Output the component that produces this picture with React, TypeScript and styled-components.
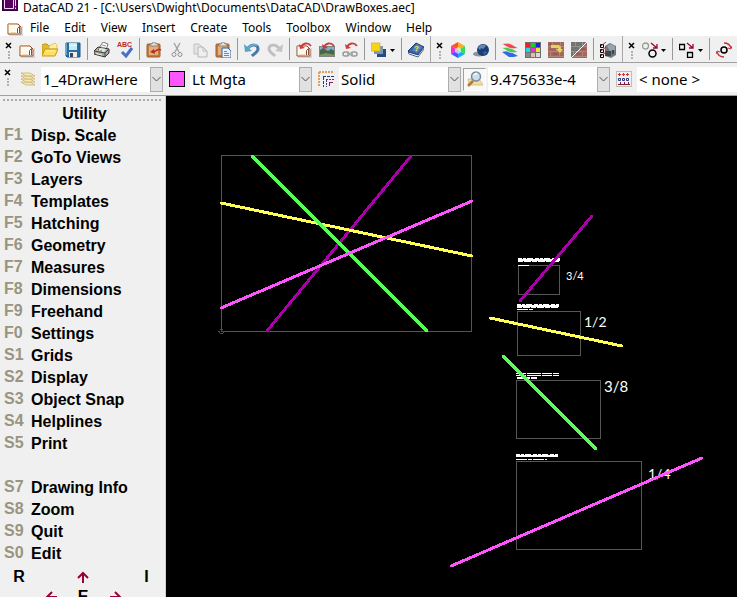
import React from "react";
import styled, { createGlobalStyle } from "styled-components";

const GlobalStyle = createGlobalStyle`
  * { box-sizing: border-box; }
  html, body, #root { height: 100%; }
  body { margin: 0; overflow: hidden; background: #f0f0f0; }
  button, select { font: inherit; color: inherit; margin: 0; padding: 0; border: 0; background: none; }
`;

const Window = styled.div`
  display: flex;
  flex-direction: column;
  height: 100vh;
  overflow: hidden;
  color: #000;
  font-family: "Noto Sans", "Open Sans", sans-serif;
`;

const TitleBar = styled.header`
  display: flex;
  flex: none;
  align-items: flex-start;
  gap: 5px;
  height: 15px;
  padding-left: 2px;
  background: #fff;
  white-space: nowrap;
`;

const Title = styled.h1`
  margin: 0;
  font-size: 12px;
  font-weight: 400;
  line-height: 15px;
`;

const MenuBar = styled.nav`
  display: flex;
  flex: none;
  align-items: center;
  gap: 15px;
  height: 21px;
  padding: 4px 0 0 7px;
  background: #fff;
  font-size: 12px;
  line-height: 17px;
`;

const MenuButton = styled.button`
  white-space: nowrap;
`;

const MenuIcon = styled.svg`
  flex: none;
  margin-right: -8px;
`;

const ToolBar = styled.div<{ $tall?: boolean }>`
  display: flex;
  flex: none;
  align-items: stretch;
  height: ${(p) => (p.$tall ? 33 : 27)}px;
  border-bottom: 1px solid #a0a0a0;
  background: #f0f0f0;
  overflow: hidden;
`;

const ToolGroup = styled.div`
  display: flex;
  flex: none;
  align-items: center;
  padding-right: 2px;
  border-right: 1px solid #a8a8a8;
`;

const GripButton = styled.button<{ $narrow?: boolean }>`
  display: flex;
  flex: none;
  width: ${(p) => (p.$narrow ? 14 : 16)}px;
  align-self: flex-start;
  justify-content: center;
  padding-top: 5px;
`;

const ToolButton = styled.button<{ $menu?: boolean }>`
  display: flex;
  flex: none;
  align-items: center;
  gap: 3px;
  width: ${(p) => (p.$menu ? 31 : 23)}px;
  height: 23px;
  padding: 2px 0 0 3px;
`;

const FieldButton = styled.button<{ $pressed?: boolean }>`
  display: grid;
  flex: none;
  place-items: center;
  width: 23px;
  height: 23px;
  margin: 0 2px;
  border: 1px solid transparent;
  ${(p) =>
    p.$pressed && `background: #f8f8f8; border-color: #a0a0a0 #fff #fff #a0a0a0;`}
`;

const Separator = styled.span`
  flex: none;
  width: 1px;
  height: 22px;
  margin: 0 3px 0 2px;
  background: #989898;
`;

const Fields = styled.div`
  display: flex;
  flex: 1;
  align-items: center;
`;

const ComboBox = styled.label<{ $fill?: boolean }>`
  display: grid;
  grid-template-columns: 1fr 13px;
  flex: ${(p) => (p.$fill ? "1 0 122px" : "0 0 122px")};
  height: 25px;
  background: #fff;
  font-size: 15px;
`;

const Select = styled.select`
  grid-area: 1 / 1 / 2 / 3;
  min-width: 0;
  padding-left: 2px;
  appearance: none;
  outline: none;
`;

const DropArrow = styled.span`
  display: grid;
  grid-area: 1 / 2 / 2 / 3;
  place-items: center;
  border: 1px solid #adadad;
  background: #e1e1e1;
  pointer-events: none;
`;

const Main = styled.main`
  display: flex;
  flex: 1;
  min-height: 0;
`;

const SideMenu = styled.aside`
  flex: 0 0 166px;
  overflow: hidden;
  border-right: 1px solid #d0d0d0;
  background: #f0f0f0;
  font: bold 16px/22px "Liberation Sans", Arial, sans-serif;
`;

const SideGrip = styled.div`
  height: 7px;
  margin: 0 2px;
  background: radial-gradient(circle at 2px 4px, #aaa 1px, transparent 1px) 0 0 / 4px 7px;
`;

const SideTitle = styled.h2`
  margin: 0;
  padding-left: 4px;
  font: inherit;
  text-align: center;
`;

const SideItem = styled.button`
  display: grid;
  grid-template-columns: 27px 1fr;
  width: 100%;
  height: 22px;
  padding-left: 4px;
  text-align: left;
  white-space: nowrap;
`;

const Key = styled.span`
  color: #989580;
  line-height: 20px;
`;

const SideGap = styled.div`
  height: 22px;
`;

const Pad = styled.div`
  display: grid;
  grid-template-columns: 38px 25px 40px 25px 1fr;
  grid-auto-rows: 20px;
  align-items: center;
  justify-items: center;
  padding-top: 2px;
`;

const PadButton = styled.button<{ $col: number; $row: number }>`
  display: grid;
  grid-column: ${(p) => p.$col};
  grid-row: ${(p) => p.$row};
  place-items: center;
  line-height: 20px;
`;

const Drawing = styled.svg`
  flex: 1;
  min-width: 0;
  background: #000;
`;

const DimText = styled.text`
  fill: #fff;
  font-family: Lato, "Open Sans", sans-serif;
  font-weight: 400;
`;

const paperShape = (
  <>
    <path d="M2 15h14V6" fill="none" stroke="#c4b8b0" />
    <path d="M1 4h10l3 3v7H1z" fill="#fffaf0" stroke="#8c4a30" />
    <path d="M1.500 13V4.500H10" fill="none" stroke="#d8b08c" />
    <path d="M10.500 13V8.500l2-2v6.500" fill="#fff" stroke="#8c4a30" />
    <path d="M3 12.500h6" stroke="#f0d8b0" />
  </>
);

const redArrow = (
  <>
    <path d="M5 5C7 1 12 0 15 4" fill="none" stroke="#cc3c3c" strokeWidth="1.800" />
    <path d="M3 2l1 5 5-1z" fill="#cc3c3c" />
  </>
);

const clipShape = (
  <>
    <rect x="1" y="2" width="13" height="13" rx="1" fill="#c67a3a" stroke="#9c5c2c" />
    <rect x="3" y="4" width="9" height="9" fill="#e0b080" />
    <path d="M4 4V2h2l1-2h2l1 2h2v2z" fill="#dedede" stroke="#77706a" strokeWidth=".7" />
  </>
);

const bricks = (
  <>
    <rect width="16" height="16" fill="#a4675c" />
    <path d="M0 4.500h16M0 9.500h16M0 14.500h16M4.500 0v4M12.500 0v4M8.500 5v4M2.500 10v4M11.500 10v4" stroke="#b08478" />
    <path d="M1 2h2M10 7h4M5 12h4" stroke="#8c5048" />
  </>
);

const icons: Record<string, React.ReactNode> = {
  new: paperShape,
  open: (
    <>
      <path d="M0 13V3l2-1h3l2 2h5v9z" fill="#e4b828" stroke="#c09820" />
      <path d="M7 4l6-3 2 2v4H7z" fill="#fff0a0" stroke="#d8b040" strokeWidth=".7" />
      <path d="M0 14l3-7h13l-3 7z" fill="#ffe058" stroke="#c79a1c" />
      <path d="M4 9h9" stroke="#fff6b8" />
    </>
  ),
  save: (
    <>
      <path d="M1 1h14v14H2l-1-1z" fill="#2c6ca4" stroke="#1c5488" />
      <rect x="4" y="1" width="8" height="7" fill="#c4ecf0" />
      <path d="M4 3.500h8" stroke="#e8fcfc" />
      <path d="M1.500 1v12" stroke="#60a8cc" />
      <rect x="4" y="10" width="8" height="5" fill="#eee" />
      <rect x="5" y="11" width="3" height="4" fill="#384858" />
    </>
  ),
  print: (
    <>
      <path d="M5 6l4-6 5 2-2 6z" fill="#fff" stroke="#777" />
      <path d="M0 9l4-4 11 2v4l-4 4-11-3z" fill="#a8a8a8" stroke="#333" />
      <path d="M0 9l11 2 4-4M11 11v4" stroke="#444" fill="none" />
      <path d="M3 8l3-2 6 1-2 3z" fill="#e8e8e8" />
      <path d="M8 3l4 1M7 5l4 1" stroke="#999" />
      <path d="M2 11.500l6 1.500" stroke="#eee" />
      <path d="M6 9h2" stroke="#10d830" strokeWidth="1.500" />
      <path d="M4 7.500h1" stroke="#d02020" strokeWidth="1.500" />
    </>
  ),
  spell: (
    <>
      <text x="0" y="5" fontSize="7" fontWeight="bold" fontFamily="Liberation Sans" fill="#bf2828">ABC</text>
      <path d="M5 10l4 4 6-8" fill="none" stroke="#4870c4" strokeWidth="3" />
    </>
  ),
  clipUndo: (
    <>
      {clipShape}
      <path d="M15 8C11 6 9 11 6 10" fill="none" stroke="#c02828" strokeWidth="1.500" />
      <path d="M4 10l4-3 1 5z" fill="#c02828" />
    </>
  ),
  cut: (
    <>
      <path d="M5 1l5 9M11 1L6 10" stroke="#a4a4a4" strokeWidth="1.500" />
      <circle cx="5" cy="12.500" r="2" fill="none" stroke="#909090" />
      <circle cx="11" cy="12.500" r="2" fill="none" stroke="#909090" />
    </>
  ),
  copy: (
    <>
      <path d="M2 2h5l3 3v7H2z" fill="#e4e4e4" stroke="#c0c0c0" />
      <path d="M6 5h5l4 4v6H6z" fill="#eee" stroke="#b8b8b8" />
      <path d="M11 5v4h4" fill="none" stroke="#bbb" />
    </>
  ),
  paste: (
    <>
      {clipShape}
      <path d="M7 6h6l3 3v7H7z" fill="#eaf4ff" stroke="#3a6094" />
      <path d="M9 9.500h3M9 11.500h5M9 13.500h5" stroke="#558dbb" />
    </>
  ),
  undo: (
    <>
      <path d="M4 6c4-4 10-4 10 1 0 3-3 4-6 7" fill="none" stroke="#4878ac" strokeWidth="3" />
      <path d="M4 6c4-4 8-4 9-2" fill="none" stroke="#70b4d0" strokeWidth="1.500" />
      <path d="M0 2l1 8 7-1z" fill="#58a4c4" />
    </>
  ),
  redo: (
    <>
      <path d="M12 6C8 2 2 2 2 7c0 3 3 4 6 7" fill="none" stroke="#c0c0c0" strokeWidth="3" />
      <path d="M16 2l-1 8-7-1z" fill="#c4c4c4" />
    </>
  ),
  docReload: (<>{paperShape}{redArrow}</>),
  picture: (
    <>
      <rect x="0" y="4" width="16" height="11" fill="#7faed6" />
      <path d="M0 9l4-3 5 3 3-2 4 2v6H0z" fill="#466848" />
      <path d="M0 13l7-2 9 2v2H0z" fill="#7c9858" />
      <rect x=".5" y="4.500" width="15" height="10" fill="none" stroke="#7a8480" />
      {redArrow}
    </>
  ),
  link: (
    <>
      <rect x="1" y="10" width="6" height="4" rx="2" fill="none" stroke="#999" strokeWidth="1.500" />
      <rect x="9" y="10" width="6" height="4" rx="2" fill="none" stroke="#999" strokeWidth="1.500" />
      <path d="M5 12h6" stroke="#aaa" strokeWidth="2" />
      {redArrow}
    </>
  ),
  stack: (
    <>
      <rect x="6" y="7" width="9" height="8" fill="#284a80" />
      <rect x="3" y="4" width="9" height="8" fill="#7898b8" />
      <rect x="0" y="1" width="9" height="8" fill="#f8d418" stroke="#dcb010" strokeWidth=".7" />
    </>
  ),
  help: (
    <>
      <path d="M0 9l8-8 8 4-6 8-9-3z" fill="#3a64a8" stroke="#203c6c" />
      <path d="M0 10l10 3 6-8v2l-6 8-9-3z" fill="#fff" stroke="#203c6c" strokeWidth=".8" />
      <path d="M4 8l5-6 5 3-5 6z" fill="#5484bc" />
      <text x="6" y="9" fontSize="8" fontWeight="bold" fontFamily="Liberation Sans" fill="#f4ec50">?</text>
    </>
  ),
  cube: (
    <>
      <path d="M8 0l7 4-7 4z" fill="#f8b020" />
      <path d="M8 0L1 4l7 4z" fill="#ff5030" />
      <path d="M1 4v8l7-4z" fill="#f030d0" />
      <path d="M1 12l7 4V8z" fill="#5050ff" />
      <path d="M8 16l7-4-7-4z" fill="#18a8ff" />
      <path d="M15 12V4L8 8z" fill="#30e050" />
      <path d="M8 5l3 2v3l-3 2-3-2V7z" fill="#fff" opacity=".6" />
    </>
  ),
  globe: (
    <>
      <ellipse cx="6" cy="12" rx="6" ry="2.500" fill="#8894a0" />
      <circle cx="10" cy="8" r="6" fill="#1c3c78" />
      <path d="M5 6c2-4 6-4 8-2l-3 3-2-1-1 2z" fill="#6488b8" />
      <path d="M10 10l3-1 1 2-3 2z" fill="#3c6088" />
    </>
  ),
  sheets: (
    <>
      <path d="M0 10c3-1 6-1 9 0l7 4c-3 1-6 1-9 1z" fill="#3468e0" />
      <path d="M0 6c3-1 6-1 9 0l7 4c-3 1-6 1-9 0z" fill="#40cc50" stroke="#f0f0f0" strokeWidth=".7" />
      <path d="M0 2c3-1 6-1 9 0l7 4c-3 1-6 1-9 0z" fill="#ec4850" stroke="#f0f0f0" strokeWidth=".7" />
    </>
  ),
  palette: (
    <>
      <rect width="16" height="16" fill="#707070" />
      {["#f02020", "#20d020", "#2020e8", "#20d8e8", "#e830d8", "#f0e820", "#888", "#e8b8b0", "#d8d8d8"].map((c, i) => (
        <rect key={c} x={1 + (i % 3) * 5} y={1 + Math.floor(i / 3) * 5} width="4" height="4" fill={c} />
      ))}
    </>
  ),
  brickArrow: (
    <>
      {bricks}
      <path d="M3 3h8l2 2v2h2l-3 4-4-4h2V6H3z" fill="#e0d850" />
    </>
  ),
  brickSplit: (
    <>
      {bricks}
      <path d="M0 0h16L0 16z" fill="#747470" />
      <path d="M0 4.500h10M0 9.500h6M4.500 0v4M11.500 0v4M8.500 5v2M2.500 10v2" stroke="#929290" />
      <path d="M0 16L16 0" stroke="#fff" />
    </>
  ),
  machine: (
    <>
      <path d="M5 4l5-3 6 3v9l-5 3-6-2z" fill="#6c7880" />
      <path d="M7 4l4-2 4 2v4l-5 1z" fill="#98a4aa" />
      <path d="M5 9h6v5H5zM12 8h2v4h-2z" fill="#40484e" />
      <path d="M.500 2.500h3v3h-3zM.500 7.500h3v3h-3zM.500 12.500h3v3h-3z" fill="#fff" stroke="#000" />
      <path d="M1 4l5-4M1 9l5-4M1 14l5-4" stroke="#c02828" />
    </>
  ),
  circles: (
    <>
      <circle cx="3.500" cy="4" r="3" fill="none" stroke="#9a9a88" strokeWidth="1.300" />
      <circle cx="10.500" cy="11.500" r="3.500" fill="none" stroke="#000" strokeWidth="1.500" />
      <path d="M9 1l6 5M15 2v4h-4" fill="none" stroke="#a00038" strokeWidth="1.300" />
    </>
  ),
  squares: (
    <>
      <path d="M.500 2.500h5v5h-5zM8.500 10.500h5v5h-5z" fill="none" stroke="#000" strokeWidth="1.300" />
      <path d="M8 1l6 5M14 2v4h-4" fill="none" stroke="#a00038" strokeWidth="1.300" />
    </>
  ),
  rotate: (
    <>
      <circle cx="8" cy="8" r="3" fill="none" stroke="#000" strokeWidth="1.500" />
      <path d="M8 1c4 0 6 2 7 5M8 15c-4 0-6-2-7-5" fill="none" stroke="#c83030" strokeWidth="1.300" />
      <path d="M12 6l3 1 1-3M4 10L1 9 0 12" fill="none" stroke="#c83030" />
    </>
  ),
  layers: (
    <>
      {[11, 8, 5, 2].map((y) => (
        <path key={y} d={`M1 ${y}h9l5 3H6z`} fill="#f6e8b0" stroke="#c8b070" strokeWidth=".8" />
      ))}
    </>
  ),
  swatch: <rect x=".5" y=".5" width="15" height="15" fill="#ff55ff" stroke="#000" />,
  lineType: (
    <>
      <path d="M1 1h15M1 5h1M1 1v15" fill="none" stroke="#dda060" strokeWidth="2" strokeDasharray="2 1" />
      <path d="M5 5.500h11M5.500 6v10" fill="none" stroke="#343478" strokeDasharray="3 1" />
      <path d="M8 8.500h8M8.500 9v7" fill="none" stroke="#3c3c88" strokeDasharray="2 1" />
      <path d="M11 11.500h5M11.500 11v5" fill="none" stroke="#8c1850" strokeDasharray="4 1" />
    </>
  ),
  find: (
    <>
      <path d="M1 8h11l4 6H2z" fill="#f0e0a0" stroke="#c8b070" strokeWidth=".7" />
      <path d="M1 15l5-5" stroke="#b07848" strokeWidth="2.500" />
      <circle cx="9" cy="5.500" r="4.500" fill="#c8e0ee" stroke="#7c8c9c" strokeWidth="1.500" />
      <path d="M7 4l3-2" stroke="#fff" strokeWidth="1.500" />
    </>
  ),
  weights: (
    <>
      <rect x=".5" y=".5" width="15" height="15" fill="none" stroke="#909084" strokeDasharray="1 1" />
      <path d="M2 3.500h3M6 3.500h3M10 3.500h3M3.500 2v3M7.500 2v3M11.500 2v3" stroke="#d83030" />
      <path d="M2.500 7.500h2v2h-2zM6.500 7.500h2v2h-2zM10.500 7.500h2v2h-2z" fill="none" stroke="#283890" />
      <path d="M2 13.500h12M4.500 11v3M8.500 11v3M12.500 11v3" stroke="#881838" />
    </>
  ),
};

const Icon = ({ name }: { name: string }) => (
  <svg width="16" height="16" viewBox="0 0 16 16" aria-hidden="true">
    {icons[name]}
  </svg>
);

const Tool = ({ name, menu }: { name: string; menu?: boolean }) => (
  <ToolButton aria-label={name} $menu={menu}>
    <Icon name={name} />
    {menu && (
      <svg width="5" height="3" viewBox="0 0 5 3" aria-hidden="true">
        <path d="M0 0h5L2.500 3z" />
      </svg>
    )}
  </ToolButton>
);

const FieldTool = ({ name, pressed }: { name: string; pressed?: boolean }) => (
  <FieldButton aria-label={name} $pressed={pressed}>
    <Icon name={name} />
  </FieldButton>
);

const Grip = ({ narrow }: { narrow?: boolean }) => (
  <GripButton aria-label="Close toolbar" $narrow={narrow}>
    <svg width="7" height="19" viewBox="0 0 7 19" aria-hidden="true">
      <path d="M1 2l5 5M6 2L1 7" stroke="#000" strokeWidth="1.500" />
      <path d="M3 11h2M3 14h2M3 17h2" stroke="#b0b0b0" strokeWidth="2" />
    </svg>
  </GripButton>
);

const Combo = ({ label, value, fill }: { label: string; value: string; fill?: boolean }) => (
  <ComboBox $fill={fill}>
    <Select aria-label={label} defaultValue={value}>
      <option>{value}</option>
    </Select>
    <DropArrow>
      <svg width="9" height="6" viewBox="0 0 9 6" aria-hidden="true">
        <path d="M.5 1l4 4 4-4" fill="none" stroke="#505050" />
      </svg>
    </DropArrow>
  </ComboBox>
);

const toolGroups: string[][][] = [
  [["new", "open", "save"], ["print", "spell"], ["clipUndo", "cut", "copy", "paste"], ["undo", "redo"], ["docReload", "picture", "link"], ["stack"], ["help"]],
  [["cube", "globe"], ["sheets", "palette", "brickArrow", "brickSplit"], ["machine"]],
  [["circles"], ["squares"], ["rotate"]],
];
const withMenu = ["stack", "circles", "squares"];

const menus = ["File", "Edit", "View", "Insert", "Create", "Tools", "Toolbox", "Window", "Help"];

const utilities: [string, string][] = [
  ["F1", "Disp. Scale"], ["F2", "GoTo Views"], ["F3", "Layers"], ["F4", "Templates"], ["F5", "Hatching"],
  ["F6", "Geometry"], ["F7", "Measures"], ["F8", "Dimensions"], ["F9", "Freehand"], ["F0", "Settings"],
  ["S1", "Grids"], ["S2", "Display"], ["S3", "Object Snap"], ["S4", "Helplines"], ["S5", "Print"],
];
const actions: [string, string][] = [["S7", "Drawing Info"], ["S8", "Zoom"], ["S9", "Quit"], ["S0", "Edit"]];

const Items = ({ list }: { list: [string, string][] }) => (
  <>
    {list.map(([key, label]) => (
      <SideItem key={key}>
        <Key>{key}</Key>
        {label}
      </SideItem>
    ))}
  </>
);

const Arrow = ({ d }: { d: string }) => (
  <svg width="12" height="12" viewBox="0 0 12 12" aria-hidden="true">
    <path d={d} fill="none" stroke="#990033" strokeWidth="2" />
  </svg>
);

const Plan = () => (
  <Drawing role="img" aria-label="Drawing area" shapeRendering="crispEdges">
    <g fill="none" stroke="#555">
      <path d="M55.500 59.500h250v176h-250z" />
      <path d="M352.500 169.500h41v29h-41z" />
      <path d="M351.500 215.500h63v44h-63z" />
      <path d="M350.500 284.500h84v58h-84z" />
      <path d="M350.500 365.500h125v88h-125z" />
    </g>
    <g stroke="#fff">
      <path d="M352 164h42M351 210h42M350 359.500h42" strokeWidth="2" />
      <path d="M352 162.500h42M351 208.500h42M350 358.500h42" strokeDasharray="4 1 3 1 6 2" />
      <path d="M352 165.500h42M351 211.500h42M350 360.500h42" strokeDasharray="5 1 7 1" />
      <path d="M352 169.500h12M351 213.500h16M350 363.500h31" strokeDasharray="11 1 4 1" />
      <path d="M350 277.500h43M350 279.500h43" strokeDasharray="10 1 14 1" />
      <path d="M351 282h20" strokeWidth="2" strokeDasharray="7 1 5 1" />
    </g>
    <DimText x="400" y="184" fontSize="11">3/4</DimText>
    <DimText x="418" y="231" fontSize="14">1/2</DimText>
    <DimText x="438" y="296" fontSize="15">3/8</DimText>
    <DimText x="482" y="383" fontSize="14">1/4</DimText>
    <g strokeWidth="3" strokeLinecap="round">
      <path d="M245 60L101 235M426 120L354 205" stroke="#aa00aa" />
      <path d="M55 107l251 53M324 222l132 28" stroke="#ffff55" />
      <path d="M86 60l175 175M337 260l93 93" stroke="#55ff55" />
      <path d="M55 212l251-107M285 470l251-108" stroke="#ff55ff" />
    </g>
    <g fill="#f00">
      <path d="M54 233h3v1h-3zM52 235h2v1h-2zM57 235h2v1h-2zM53 236h1v1h-1zM57 236h1v1h-1zM54 237h3v1h-3zM55 234h1v2h-1z" />
    </g>
  </Drawing>
);

export default function App() {
  return (
    <Window>
      <GlobalStyle />
      <TitleBar>
        <svg width="16" height="12" viewBox="0 0 16 12" aria-hidden="true">
          <rect x=".5" y="-3.500" width="15" height="14" fill="#5a0060" stroke="#30003c" />
          <path d="M2.500 0v8.500h9V0M13.500 0v6M13.500 7.500v1.500" fill="none" stroke="#f4d8f4" />
        </svg>
        <Title>DataCAD 21 - [C:\Users\Dwight\Documents\DataCAD\DrawBoxes.aec]</Title>
      </TitleBar>
      <MenuBar>
        <MenuIcon width="16" height="16" viewBox="0 0 16 16" aria-hidden="true">
          {paperShape}
        </MenuIcon>
        {menus.map((m) => (
          <MenuButton key={m}>{m}</MenuButton>
        ))}
      </MenuBar>
      <ToolBar role="toolbar">
        {toolGroups.map((group, g) => (
          <ToolGroup key={g}>
            <Grip />
            {group.map((section, s) => (
              <React.Fragment key={s}>
                {s > 0 && <Separator />}
                {section.map((name) => (
                  <Tool key={name} name={name} menu={withMenu.includes(name)} />
                ))}
              </React.Fragment>
            ))}
          </ToolGroup>
        ))}
      </ToolBar>
      <ToolBar role="toolbar" $tall>
        <Grip narrow />
        <Fields>
          <FieldTool name="layers" />
          <Combo label="Layer" value="1_4DrawHere" />
          <FieldTool name="swatch" />
          <Combo label="Color" value="Lt Mgta" />
          <FieldTool name="lineType" />
          <Combo label="Line type" value="Solid" />
          <FieldTool name="find" pressed />
          <Combo label="Spacing" value="9.475633e-4" />
          <FieldTool name="weights" />
          <Combo label="Weight" value="< none >" fill />
        </Fields>
      </ToolBar>
      <Main>
        <SideMenu>
          <SideGrip />
          <SideTitle>Utility</SideTitle>
          <Items list={utilities} />
          <SideGap />
          <Items list={actions} />
          <Pad>
            <PadButton $col={1} $row={1}>R</PadButton>
            <PadButton $col={3} $row={1} aria-label="Up"><Arrow d="M6 12V2M1 7l5-5 5 5" /></PadButton>
            <PadButton $col={5} $row={1}>I</PadButton>
            <PadButton $col={2} $row={2} aria-label="Left"><Arrow d="M12 6H2M7 1L2 6l5 5" /></PadButton>
            <PadButton $col={3} $row={2}>E</PadButton>
            <PadButton $col={4} $row={2} aria-label="Right"><Arrow d="M0 6h10M5 1l5 5-5 5" /></PadButton>
          </Pad>
        </SideMenu>
        <Plan />
      </Main>
    </Window>
  );
}
